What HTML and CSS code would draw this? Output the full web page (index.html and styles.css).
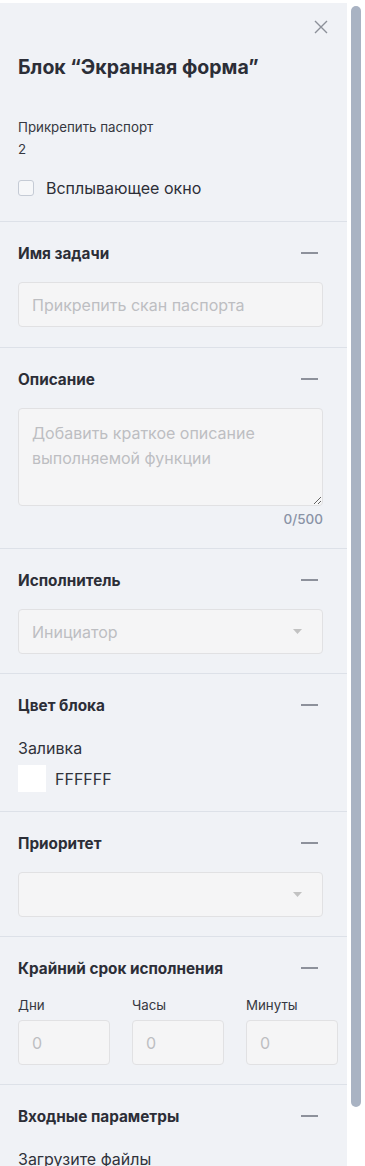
FILE: index.html
```html
<!DOCTYPE html>
<html lang="ru">
<head>
    <meta charset="UTF-8">
    <title>Блок “Экранная форма”</title>
    <link rel="stylesheet" href="styles.css">
</head>
<body>
<div class="page">
    <div class="panel">
        <div class="head">
            <div class="close-row">
                <svg class="close" width="14" height="14" viewBox="0 0 14 14">
                    <path d="M1 1L13 13M13 1L1 13" stroke="#8c9099" stroke-width="1.4" fill="none"/>
                </svg>
            </div>
            <h1 class="title">Блок “Экранная форма”</h1>
            <div class="meta">Прикрепить паспорт</div>
            <div class="meta">2</div>
            <label class="check">
                <span class="box"></span>
                <span>Всплывающее окно</span>
            </label>
        </div>

        <div class="section first">
            <div class="sec-head"><span>Имя задачи</span><i class="minus"></i></div>
            <input class="field" type="text" placeholder="Прикрепить скан паспорта">
        </div>

        <div class="section">
            <div class="sec-head"><span>Описание</span><i class="minus"></i></div>
            <textarea class="field area" placeholder="Добавить краткое описание выполняемой функции"></textarea>
            <div class="counter">0/500</div>
        </div>

        <div class="section">
            <div class="sec-head"><span>Исполнитель</span><i class="minus"></i></div>
            <div class="field select">
                <span class="ph">Инициатор</span>
                <svg width="9" height="5" viewBox="0 0 9 5"><path d="M0 0H9L4.5 5Z" fill="#c2c2c2"/></svg>
            </div>
        </div>

        <div class="section">
            <div class="sec-head"><span>Цвет блока</span><i class="minus"></i></div>
            <div class="sub">Заливка</div>
            <div class="color">
                <span class="swatch"></span>
                <span>FFFFFF</span>
            </div>
        </div>

        <div class="section">
            <div class="sec-head"><span>Приоритет</span><i class="minus"></i></div>
            <div class="field select">
                <span class="ph"></span>
                <svg width="9" height="5" viewBox="0 0 9 5"><path d="M0 0H9L4.5 5Z" fill="#c2c2c2"/></svg>
            </div>
        </div>

        <div class="section">
            <div class="sec-head"><span>Крайний срок исполнения</span><i class="minus"></i></div>
            <div class="term">
                <div class="term-col">
                    <div class="term-label">Дни</div>
                    <input class="field small" type="text" placeholder="0">
                </div>
                <div class="term-col">
                    <div class="term-label">Часы</div>
                    <input class="field small" type="text" placeholder="0">
                </div>
                <div class="term-col">
                    <div class="term-label">Минуты</div>
                    <input class="field small" type="text" placeholder="0">
                </div>
            </div>
        </div>

        <div class="section">
            <div class="sec-head"><span>Входные параметры</span><i class="minus"></i></div>
            <div class="sub">Загрузите файлы</div>
            <div class="upload"></div>
        </div>
    </div>
    <div class="track">
        <div class="thumb"></div>
    </div>
</div>
</body>
</html>
```

FILE: styles.css
```css
html, body {
    margin: 0;
    height: 100%;
    overflow: hidden;
    background: #fff;
}
body {
    font-family: Inter, "Noto Sans", sans-serif;
    color: #30323b;
    padding-top: 3px;
    box-sizing: border-box;
}
.page {
    display: flex;
    align-items: flex-start;
}
.panel {
    width: 347px;
    flex-shrink: 0;
    background: #f0f2f6;
    min-height: 1200px;
}
.track {
    width: 18px;
    padding: 3px 4px 0 4px;
    box-sizing: border-box;
}
.thumb {
    width: 10px;
    height: 1101px;
    background: #a9b3c3;
    border-radius: 5px;
}

/* шапка */
.head {
    padding: 17px 18px 24px 18px;
    border-bottom: 1px solid #dde1e8;
}
.close-row {
    display: flex;
    justify-content: flex-end;
    padding-right: 1px;
}
.close {
    display: block;
}
.title {
    margin: 21px 0 37px 0;
    font-size: 19.5px;
    line-height: 24px;
    font-weight: 700;
    color: #2c2e37;
}
.meta {
    font-size: 13.3px;
    line-height: 22px;
    color: #363841;
}
.check {
    display: flex;
    align-items: center;
    gap: 12px;
    margin-top: 19px;
    font-size: 16px;
    line-height: 18px;
    color: #2c2e37;
}
.box {
    width: 14px;
    height: 14px;
    border: 1.5px solid #c5cbd5;
    border-radius: 3px;
    background: #f6f7f9;
}

/* секции */
.section {
    padding: 21px 24px 19px 18px;
    border-bottom: 1px solid #dde1e8;
}
.section.first {
    padding-bottom: 20px;
}
.sec-head {
    display: flex;
    justify-content: space-between;
    align-items: center;
    height: 20px;
    margin-bottom: 19px;
    font-size: 15.3px;
    font-weight: 700;
    color: #2c2e37;
}
.minus {
    width: 17px;
    height: 1.5px;
    background: #8d919b;
    margin-right: 5px;
}
.field {
    display: block;
    box-sizing: border-box;
    width: 100%;
    height: 45px;
    margin: 0;
    padding: 0 13px;
    border: 1px solid #e1e1e3;
    border-radius: 4px;
    background: #f5f5f6;
    font-family: inherit;
    font-size: 16px;
    color: #30323b;
    outline: none;
}
.field::placeholder {
    color: #bdbec2;
}
.area {
    height: 98px;
    padding: 12px 13px;
    line-height: 25px;
    resize: vertical;
}
.counter {
    text-align: right;
    font-size: 13.5px;
    line-height: 16px;
    margin-top: 5px;
    margin-bottom: 2px;
    color: #8a93a6;
    font-weight: 500;
}
.select {
    display: flex;
    align-items: center;
    justify-content: space-between;
    padding-right: 20px;
}
.ph {
    color: #bdbec2;
}
.sub {
    font-size: 16px;
    line-height: 20px;
    color: #30323b;
    margin-top: 23px;
}
.color {
    display: flex;
    align-items: center;
    gap: 9px;
    margin-top: 7px;
    font-size: 16px;
}
.swatch {
    width: 28px;
    height: 27px;
    background: #fff;
}
.term {
    display: flex;
    gap: 22px;
    margin-right: -15px;
}
.term-col {
    width: 92px;
}
.term-label {
    font-size: 13.3px;
    line-height: 16px;
    color: #363841;
    margin-bottom: 7px;
}
.upload {
    height: 60px;
}
```
